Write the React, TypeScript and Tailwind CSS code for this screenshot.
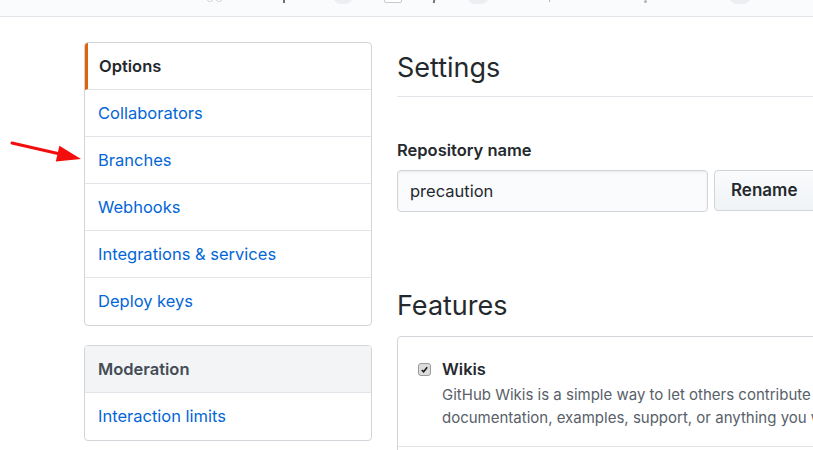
import React from "react";

const menu = ["Collaborators", "Branches", "Webhooks", "Integrations & services", "Deploy keys"];

function TopBar() {
  return (
    <div className="h-[17px] overflow-hidden border-b border-[#e1e4e8] bg-[#fafbfc]">
      <div className="flex h-[6px] items-start">
        <span className="ml-[207px] mt-[-3px] h-[5px] w-[6px] rounded-full border border-[#d1d5da]" />
        <span className="ml-[3px] mt-[-3px] h-[5px] w-[6px] rounded-full border border-[#d1d5da]" />
        <span className="ml-[61px] h-[3px] w-[2px] bg-[#6a737d]" />
        <span className="ml-[48px] mt-[-12px] h-[16px] w-[20px] rounded-full bg-[#eceef1]" />
        <span className="ml-[31px] mt-[-2px] h-[5px] w-[18px] rounded-[2px] border border-[#c6cbd1] bg-white" />
        <span className="ml-[31px] h-[3px] w-[2px] rotate-12 bg-[#6a737d]" />
        <span className="ml-[32px] mt-[-12px] h-[16px] w-[22px] rounded-full bg-[#eceef1]" />
        <span className="ml-[60px] h-[2px] w-[1px] bg-[#b0b6bd]" />
        <span className="ml-[94px] h-[3px] w-[3px] rounded-full bg-[#b0b6bd]" />
        <span className="ml-[82px] mt-[-12px] h-[16px] w-[22px] rounded-full bg-[#eceef1]" />
      </div>
    </div>
  );
}

function Arrow() {
  return (
    <svg className="pointer-events-none absolute left-0 top-0" width="100" height="200" viewBox="0 0 100 200">
      <line x1="12" y1="143" x2="60" y2="154" stroke="#f40d0d" strokeWidth="3" strokeLinecap="round" />
      <polygon points="81,159 59.4,145.8 55.8,161.4" fill="#f40d0d" />
    </svg>
  );
}

export default function App() {
  return (
    <div
      className="relative h-[450px] w-[813px] overflow-hidden bg-white text-[#24292e]"
      style={{ fontFamily: "Inter, 'Noto Sans', sans-serif" }}
    >
      <TopBar />
      <div className="flex pl-[84px] pt-[25px]">
        <aside className="w-[288px] shrink-0">
          <nav className="overflow-hidden rounded-[4px] border border-[#d1d5da]">
            <div className="flex h-[47px] items-center border-b border-l-[3px] border-b-[#e1e4e8] border-l-[#e36209] pl-[11px] text-[16.5px] font-semibold">
              Options
            </div>
            {menu.map((m, i) => (
              <div
                key={m}
                className={
                  "flex h-[47px] items-center pl-[13px] text-[16.5px] text-[#0366d6] " +
                  (i < menu.length - 1 ? "border-b border-[#e1e4e8]" : "")
                }
              >
                {m}
              </div>
            ))}
          </nav>
          <nav className="mt-[19px] overflow-hidden rounded-[4px] border border-[#d1d5da]">
            <div className="flex h-[47px] items-center border-b border-[#e1e4e8] bg-[#f3f4f6] pl-[13px] text-[16.5px] font-semibold text-[#444d56]">
              Moderation
            </div>
            <div className="flex h-[47px] items-center pl-[13px] text-[16.5px] text-[#0366d6]">Interaction limits</div>
          </nav>
        </aside>

        <main className="ml-[25px] w-[700px] shrink-0">
          <div className="h-[55px] border-b border-[#e1e4e8]">
            <h1 className="text-[27px] font-normal leading-[51px]">Settings</h1>
          </div>
          <div className="mt-[43px] text-[16.5px] font-semibold leading-[20px]">Repository name</div>
          <div className="mt-[10px] flex gap-[6px]">
            <div className="flex h-[42px] w-[311px] items-center rounded-[4px] border border-[#d1d5da] bg-[#fafbfc] pl-[12px] text-[16.5px] shadow-[inset_0_1px_2px_rgba(27,31,35,0.075)]">
              precaution
            </div>
            <div className="flex h-[41px] w-[110px] items-center rounded-[4px] border border-[#d1d5da] bg-gradient-to-b from-[#fafbfc] to-[#eff3f6] pl-[16px] text-[17px] font-semibold">
              Rename
            </div>
          </div>
          <h2 className="mt-[74px] text-[27px] font-normal leading-[40px]">Features</h2>
          <div className="mt-[10px] h-[200px] rounded-[4px] border border-[#d1d5da]">
            <div className="border-b border-[#e1e4e8] pb-[17px] pl-[20px] pt-[22px]">
              <div className="flex items-center">
                <span className="flex h-[13px] w-[13px] items-center justify-center rounded-[3px] border border-[#9a9a9a] bg-[#dcdcdc]">
                  <svg width="9" height="9" viewBox="0 0 10 10">
                    <path d="M2 5.5 L4 7.5 L8 2.5" fill="none" stroke="#1a1a1a" strokeWidth="1.8" />
                  </svg>
                </span>
                <span className="ml-[11px] text-[16.5px] font-semibold leading-[20px]">Wikis</span>
              </div>
              <p className="ml-[24px] mt-[4px] whitespace-nowrap text-[15px] leading-[23px] text-[#586069]">
                GitHub Wikis is a simple way to let others contribute content. Any GitHub user can create and edit pages
                <br />
                documentation, examples, support, or anything you wish.
              </p>
            </div>
          </div>
        </main>
      </div>
      <Arrow />
    </div>
  );
}
